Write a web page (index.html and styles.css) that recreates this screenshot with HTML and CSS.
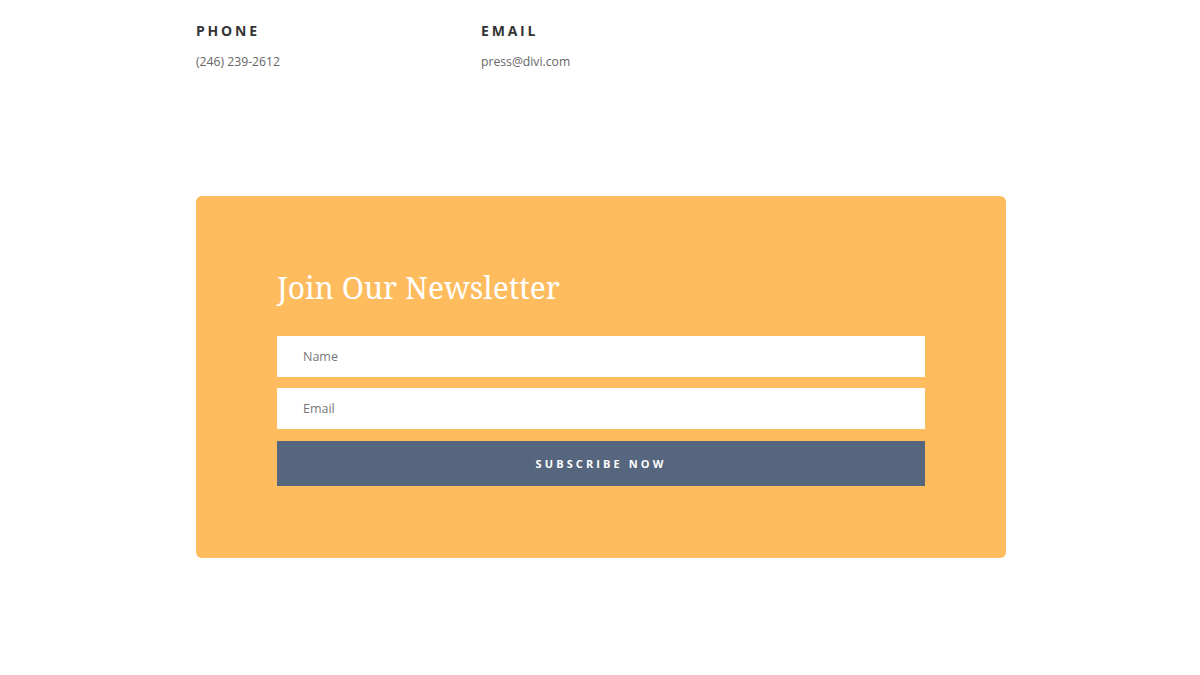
FILE: index.html
```html
<!DOCTYPE html>
<html>
<head>
<meta charset="utf-8">
<link rel="stylesheet" href="styles.css">
</head>
<body>
<div class="page">
  <div class="contacts">
    <div class="contact">
      <h4 class="label">PHONE</h4>
      <p class="value">(246) 239-2612</p>
    </div>
    <div class="contact">
      <h4 class="label">EMAIL</h4>
      <p class="value">press@divi.com</p>
    </div>
  </div>
  <section class="newsletter">
    <h2 class="title">Join Our Newsletter</h2>
    <form class="form">
      <div class="field">Name</div>
      <div class="field">Email</div>
      <div class="button">SUBSCRIBE NOW</div>
    </form>
  </section>
</div>
</body>
</html>
```
FILE: styles.css
```css
* { box-sizing: border-box; }
html, body { margin: 0; padding: 0; background: #fff; }
body { font-family: "Open Sans", "Liberation Sans", sans-serif; }
.page { width: 810px; margin-left: calc(50% - 404px); padding-top: 22px; }
.contacts { display: flex; }
.contact { width: 285px; }
.label {
  margin: 0;
  font-size: 14px;
  font-weight: 700;
  letter-spacing: 2.8px;
  color: #333;
  line-height: 18px;
}
.value {
  margin: 13px 0 0;
  font-size: 12.2px;
  color: #666;
  line-height: 18px;
}
.newsletter {
  margin-top: 125px;
  background: #febc5e;
  border-radius: 6px;
  height: 362px;
  padding: 71px 81px 0 81px;
}
.title {
  margin: 0;
  font-family: "Noto Serif", "DejaVu Serif", "Liberation Serif", serif;
  font-weight: 400;
  font-size: 30px;
  color: #fff;
  line-height: 42px;
}
.form { margin-top: 27px; display: flex; flex-direction: column; gap: 11px; }
.field {
  background: #fff;
  height: 41px;
  padding: 0 26px;
  display: flex;
  align-items: center;
  font-size: 12.5px;
  color: #777;
}
.button {
  background: #56667f;
  height: 45px;
  margin-top: 1px;
  display: flex;
  align-items: center;
  justify-content: center;
  font-size: 11px;
  font-weight: 700;
  letter-spacing: 3.1px;
  color: #fff;
}
```
